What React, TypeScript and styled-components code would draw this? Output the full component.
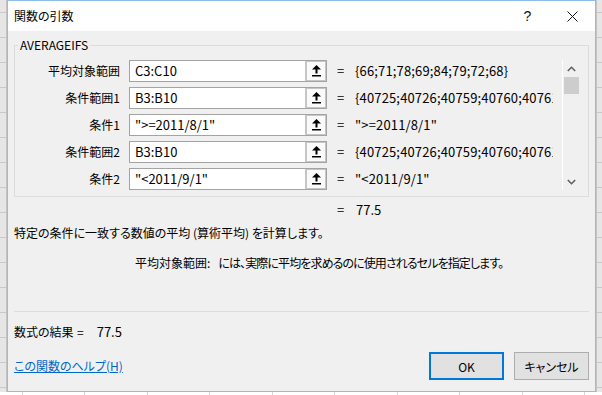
import React from "react";
import styled, { createGlobalStyle } from "styled-components";

const Global = createGlobalStyle`
  html, body { margin: 0; padding: 0; }
  body {
    width: 602px;
    height: 395px;
    overflow: hidden;
    font-family: "Noto Sans CJK JP", "Noto Sans", sans-serif;
    color: #000;
  }
  * { box-sizing: border-box; }
`;

const Desktop = styled.div`
  width: 602px;
  height: 395px;
  display: grid;
  grid-template-columns: 7px 589px 6px;
  grid-template-rows: 392px 3px;
`;

const SideStrip = styled.div<{ $left?: boolean }>`
  background: repeating-linear-gradient(
    to bottom,
    #e6e6e6 0 12px,
    #c9c9c9 12px 13px,
    #e6e6e6 13px 25px
  );
  ${(p) => (p.$left ? "border-right: 1px solid #c4c4c4;" : "border-left: 1px solid #c4c4c4;")}
`;

const BottomStrip = styled.div`
  grid-column: 1 / span 3;
  background: repeating-linear-gradient(to right, #d4d4d4 0 1px, #ffffff 1px 62.5px);
  background-position: 22px 0;
`;

const Dialog = styled.div`
  border: 1px solid #8cbdeb;
  background: #f0f0f0;
  display: flex;
  flex-direction: column;
`;

const TitleBar = styled.div`
  height: 30px;
  background: #fff;
  display: flex;
  align-items: center;
  padding-left: 6px;
`;

const Title = styled.div`
  flex: 1;
  font-size: 12px;
  line-height: 16px;
  font-feature-settings: "palt";
`;

const CaptionButton = styled.div<{ $shift?: number }>`
  width: 46px;
  height: 30px;
  display: flex;
  align-items: center;
  justify-content: center;
  font-size: 14px;
  font-family: "Liberation Sans", sans-serif;
  color: #111;
  padding-left: ${(p) => p.$shift ?? 0}px;
`;

const Content = styled.div`
  flex: 1;
  display: flex;
  flex-direction: column;
  padding: 6px 6px 10px 6px;
`;

const Group = styled.fieldset`
  margin: 0;
  min-width: 0;
  border: 1px solid #dcdcdc;
  padding: 7px 6px 6px 0;
`;

const Legend = styled.legend`
  font-size: 12px;
  line-height: 16px;
  padding: 0 2px;
  margin-left: 3px;
`;

const ArgGrid = styled.div`
  display: grid;
  grid-template-columns: 114px 208px 18px 207px 18px;
  grid-auto-rows: 22px;
  row-gap: 5px;
`;

const Label = styled.div`
  font-size: 12px;
  line-height: 22px;
  text-align: right;
  padding-right: 9px;
  white-space: nowrap;
`;

const Field = styled.div`
  width: 198px;
  height: 22px;
  display: flex;
  border: 1px solid #a3a3a3;
  background: #fff;
`;

const FieldText = styled.div`
  flex: 1;
  font-size: 13px;
  line-height: 20px;
  padding-left: 5px;
  white-space: nowrap;
  overflow: hidden;
`;

const RefButton = styled.div`
  width: 21px;
  height: 20px;
  background: #fafafa;
  border-left: 2px solid #c6c6c6;
  box-shadow: inset 0 1px 0 #c6c6c6, inset 0 -1px 0 #c6c6c6, inset -1px 0 0 #c6c6c6;
  display: flex;
  align-items: center;
  justify-content: center;
`;

const Eq = styled.div`
  font-size: 13px;
  line-height: 22px;
`;

const Value = styled.div`
  width: 198px;
  font-size: 13px;
  line-height: 22px;
  letter-spacing: 0.15px;
  white-space: nowrap;
  overflow: hidden;
`;

const Scrollbar = styled.div`
  grid-column: 5;
  grid-row: 1 / span 5;
  border-left: 1px solid #ffffff;
  display: flex;
  flex-direction: column;
  align-items: center;
`;

const ScrollArrow = styled.div`
  height: 17px;
  width: 17px;
  display: flex;
  align-items: center;
  justify-content: center;
`;

const Thumb = styled.div`
  width: 15px;
  height: 17px;
  background: #cdcdcd;
`;

const Spacer = styled.div`
  flex: 1;
`;

const ResultLine = styled.div`
  display: flex;
  margin-top: 5px;
  padding-left: 323px;
  font-size: 13px;
  line-height: 16px;
`;

const ResultEq = styled.span`
  width: 19px;
`;

const Description = styled.div`
  margin-top: 7px;
  font-size: 12px;
  line-height: 16px;
  white-space: nowrap;
  font-feature-settings: "palt";
`;

const ArgHelp = styled.div`
  margin-top: 14px;
  padding-left: 121px;
  display: flex;
  gap: 8px;
  font-size: 12px;
  line-height: 16px;
  white-space: nowrap;
  font-feature-settings: "palt";
`;

const ArgHelpText = styled.span`
  letter-spacing: -0.9px;
`;

const Separator = styled.div`
  margin-top: 40px;
  height: 1px;
  background: #dcdcdc;
`;

const FormulaResult = styled.div`
  margin-top: 12px;
  display: flex;
  font-size: 12px;
  line-height: 16px;
  white-space: nowrap;
  font-feature-settings: "palt";
`;

const ResultCaption = styled.span`
  width: 63px;
`;

const ResultNumber = styled.span`
  margin-left: 13px;
  font-size: 13px;
`;

const Footer = styled.div`
  margin-top: 12px;
  height: 28px;
  display: flex;
  align-items: center;
  gap: 10px;
`;

const HelpLink = styled.a`
  flex: 1;
  font-size: 12px;
  line-height: 16px;
  color: #0066cc;
  text-decoration: underline;
  cursor: pointer;
  font-feature-settings: "palt";
`;

const DialogButton = styled.button<{ $primary?: boolean }>`
  width: 75px;
  height: 28px;
  background: #e1e1e1;
  border: ${(p) => (p.$primary ? "2px solid #0078d7" : "1px solid #adadad")};
  font-family: "Noto Sans CJK JP", sans-serif;
  font-size: 12px;
  color: #000;
  padding: 0;
  font-feature-settings: "palt";
`;

const RefIcon = () => (
  <svg width="9" height="12" viewBox="0 0 9 12">
    <polygon points="4.5,0 0,4.5 9,4.5" fill="#000" />
    <rect x="3.5" y="4" width="2" height="4.5" fill="#000" />
    <rect x="0" y="10" width="9" height="1.5" fill="#000" />
  </svg>
);

const Chevron = ({ down }: { down?: boolean }) => (
  <svg width="9" height="6" viewBox="0 0 9 6">
    <polyline
      points={down ? "0.8,1 4.5,4.7 8.2,1" : "0.8,5 4.5,1.3 8.2,5"}
      fill="none"
      stroke="#606060"
      strokeWidth="1.6"
    />
  </svg>
);

const CloseIcon = () => (
  <svg width="11" height="11" viewBox="0 0 11 11">
    <path d="M0.5 0.5 L10.5 10.5 M10.5 0.5 L0.5 10.5" stroke="#111" strokeWidth="1" />
  </svg>
);

const args = [
  { label: "平均対象範囲", input: "C3:C10", value: "{66;71;78;69;84;79;72;68}" },
  { label: "条件範囲1", input: "B3:B10", value: "{40725;40726;40759;40760;40761;40788;40789;40790}" },
  { label: "条件1", input: '">=2011/8/1"', value: '">=2011/8/1"' },
  { label: "条件範囲2", input: "B3:B10", value: "{40725;40726;40759;40760;40761;40788;40789;40790}" },
  { label: "条件2", input: '"<2011/9/1"', value: '"<2011/9/1"' },
];

export default function App() {
  return (
    <>
      <Global />
      <Desktop>
        <SideStrip $left />
        <Dialog>
          <TitleBar>
            <Title>関数の引数</Title>
            <CaptionButton $shift={3}>?</CaptionButton>
            <CaptionButton $shift={0}>
              <CloseIcon />
            </CaptionButton>
          </TitleBar>
          <Content>
            <Group>
              <Legend>AVERAGEIFS</Legend>
              <ArgGrid>
                {args.map((a, i) => (
                  <React.Fragment key={i}>
                    <Label>{a.label}</Label>
                    <Field>
                      <FieldText>{a.input}</FieldText>
                      <RefButton>
                        <RefIcon />
                      </RefButton>
                    </Field>
                    <Eq>=</Eq>
                    <Value>{a.value}</Value>
                  </React.Fragment>
                ))}
                <Scrollbar>
                  <ScrollArrow>
                    <Chevron />
                  </ScrollArrow>
                  <Thumb />
                  <Spacer />
                  <ScrollArrow>
                    <Chevron down />
                  </ScrollArrow>
                </Scrollbar>
              </ArgGrid>
            </Group>
            <ResultLine>
              <ResultEq>=</ResultEq>
              <span>77.5</span>
            </ResultLine>
            <Description>特定の条件に一致する数値の平均 (算術平均) を計算します。</Description>
            <ArgHelp>
              <span>平均対象範囲:</span>
              <ArgHelpText>には、実際に平均を求めるのに使用されるセルを指定します。</ArgHelpText>
            </ArgHelp>
            <Separator />
            <FormulaResult>
              <ResultCaption>数式の結果</ResultCaption>
              <span>=</span>
              <ResultNumber>77.5</ResultNumber>
            </FormulaResult>
            <Footer>
              <HelpLink>この関数のヘルプ(H)</HelpLink>
              <DialogButton $primary>OK</DialogButton>
              <DialogButton>キャンセル</DialogButton>
            </Footer>
          </Content>
        </Dialog>
        <SideStrip />
        <BottomStrip />
      </Desktop>
    </>
  );
}
